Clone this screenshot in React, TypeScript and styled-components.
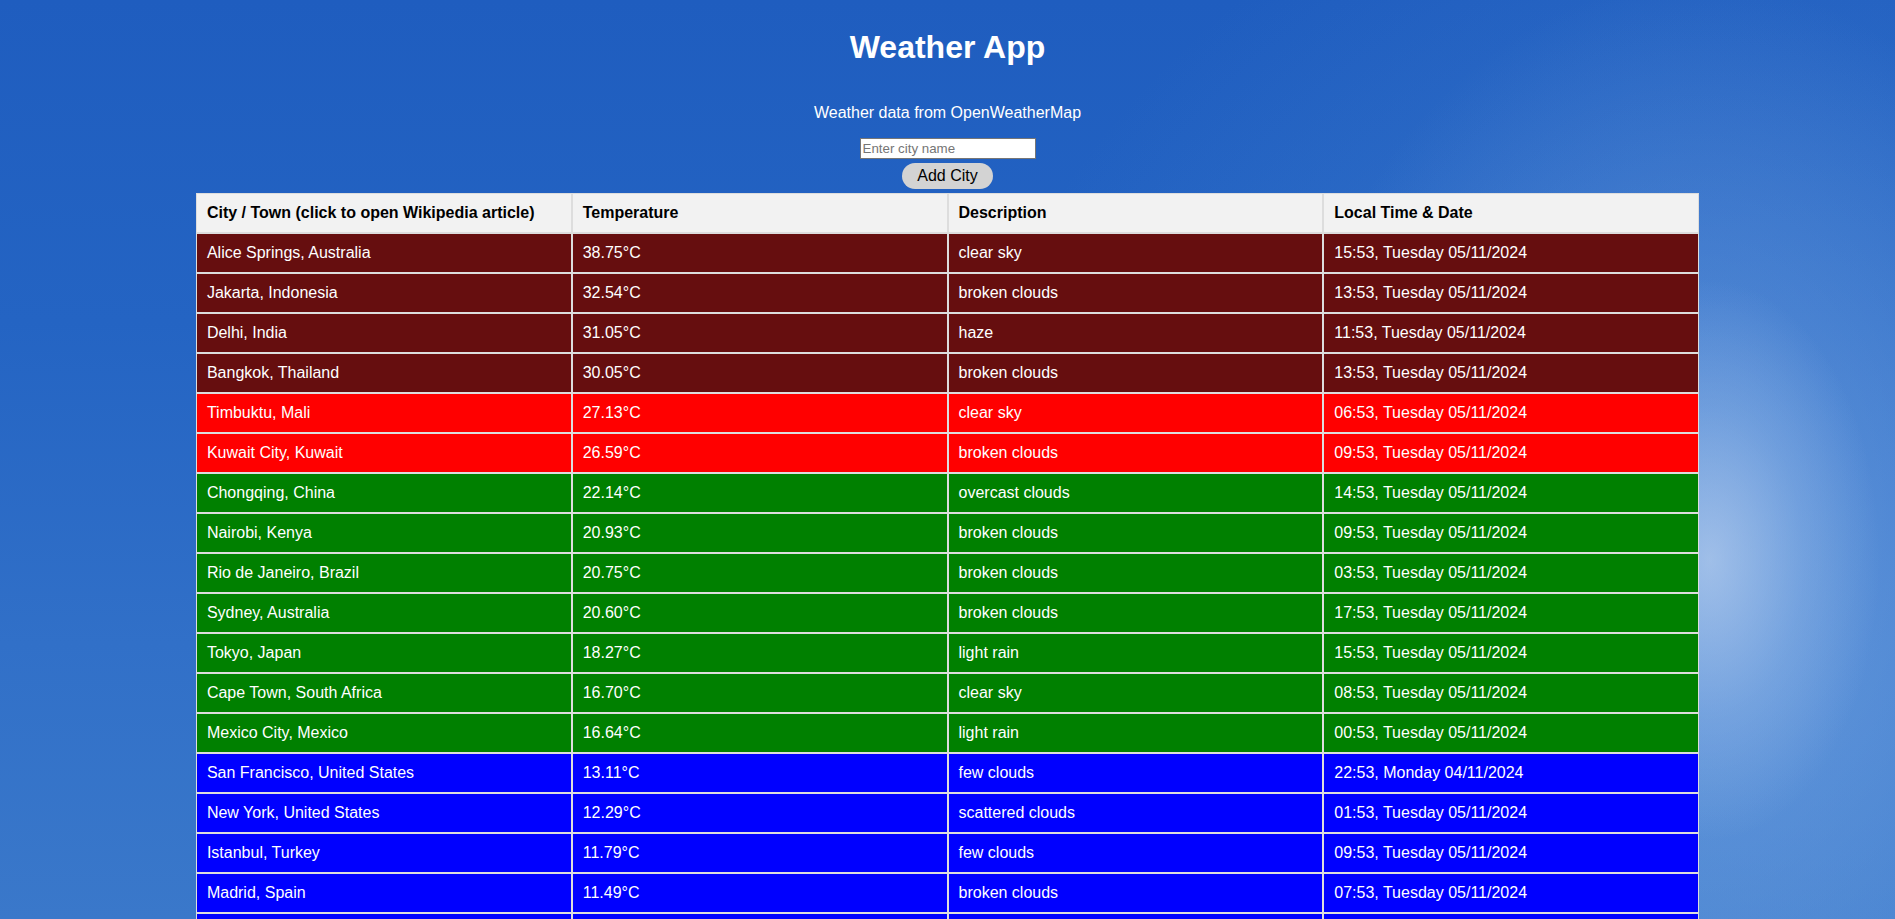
import React from "react";
import styled, { createGlobalStyle } from "styled-components";

const GlobalStyle = createGlobalStyle`
  html {
    scrollbar-width: none;
    min-height: 100%;
    background-color: #2a69c6;
    background-image:
      radial-gradient(ellipse 170px 280px at 1710px 560px, rgba(200, 218, 242, 0.6), rgba(170, 200, 238, 0.3) 55%, rgba(140, 180, 230, 0) 100%),
      radial-gradient(ellipse 440px 600px at 1700px 580px, rgba(130, 172, 228, 0.55), rgba(100, 150, 220, 0) 100%),
      radial-gradient(ellipse 900px 900px at 1800px 700px, rgba(80, 140, 215, 0.6), rgba(80, 140, 215, 0) 100%),
      linear-gradient(180deg, #1f5dbf 0%, #2464c3 35%, #3170c8 70%, #3a78ca 100%);
    background-attachment: fixed;
  }
  html::-webkit-scrollbar { display: none; }
  body {
    margin: 0;
    padding: 8px;
    font-family: "Liberation Sans", Arial, sans-serif;
    color: #ffffff;
  }
`;

const Page = styled.div`
  display: flex;
  flex-direction: column;
  align-items: center;
  text-align: center;
`;

const Title = styled.h1`
  margin: 21px 0 0;
  font-size: 32px;
  line-height: 37px;
  font-weight: 700;
  color: #ffffff;
`;

const Subtitle = styled.p`
  margin: 38px 0 0;
  font-size: 16px;
  line-height: 18px;
  color: #ffffff;
`;

const Form = styled.form`
  margin-top: 16px;
  display: flex;
  flex-direction: column;
  align-items: center;
  gap: 4px;
`;

const CityInput = styled.input`
  box-sizing: border-box;
  width: 176px;
  height: 21px;
  padding: 1px 2px;
  border: 1px solid #767676;
  background: #ffffff;
  font-family: "Liberation Sans", Arial, sans-serif;
  font-size: 13.33px;
  color: #000;
  outline: none;
  &::placeholder {
    color: #757575;
  }
`;

const AddButton = styled.button`
  height: 26px;
  padding: 4px 15px;
  border: none;
  border-radius: 13px;
  background: #d3d3d3;
  color: #000;
  font-family: "Liberation Sans", Arial, sans-serif;
  font-size: 16px;
  line-height: 18px;
  cursor: pointer;
`;

const Table = styled.table`
  width: 80%;
  margin-top: 4px;
  border-collapse: separate;
  border-spacing: 0;
  table-layout: fixed;
  text-align: left;
`;

const HeadCell = styled.th`
  padding: 10px;
  border: 1px solid #dddddd;
  background: #f2f2f2;
  color: #000000;
  font-size: 16px;
  line-height: 18px;
  font-weight: 700;
  text-align: left;
  white-space: nowrap;
`;

const Row = styled.tr<{ $bg: string }>`
  background: ${(p) => p.$bg};
`;

const Cell = styled.td`
  padding: 10px;
  border: 1px solid #dddddd;
  color: #ffffff;
  font-size: 16px;
  line-height: 18px;
`;

const CityLink = styled.a`
  color: #ffffff;
  text-decoration: none;
`;

type Band = "hot" | "warm" | "mild" | "cool";

const bandColor: Record<Band, string> = {
  hot: "#660e0f",
  warm: "#ff0000",
  mild: "#008000",
  cool: "#0000ff",
};

const rows: { city: string; temp: string; desc: string; time: string; band: Band }[] = [
  { city: "Alice Springs, Australia", temp: "38.75°C", desc: "clear sky", time: "15:53, Tuesday 05/11/2024", band: "hot" },
  { city: "Jakarta, Indonesia", temp: "32.54°C", desc: "broken clouds", time: "13:53, Tuesday 05/11/2024", band: "hot" },
  { city: "Delhi, India", temp: "31.05°C", desc: "haze", time: "11:53, Tuesday 05/11/2024", band: "hot" },
  { city: "Bangkok, Thailand", temp: "30.05°C", desc: "broken clouds", time: "13:53, Tuesday 05/11/2024", band: "hot" },
  { city: "Timbuktu, Mali", temp: "27.13°C", desc: "clear sky", time: "06:53, Tuesday 05/11/2024", band: "warm" },
  { city: "Kuwait City, Kuwait", temp: "26.59°C", desc: "broken clouds", time: "09:53, Tuesday 05/11/2024", band: "warm" },
  { city: "Chongqing, China", temp: "22.14°C", desc: "overcast clouds", time: "14:53, Tuesday 05/11/2024", band: "mild" },
  { city: "Nairobi, Kenya", temp: "20.93°C", desc: "broken clouds", time: "09:53, Tuesday 05/11/2024", band: "mild" },
  { city: "Rio de Janeiro, Brazil", temp: "20.75°C", desc: "broken clouds", time: "03:53, Tuesday 05/11/2024", band: "mild" },
  { city: "Sydney, Australia", temp: "20.60°C", desc: "broken clouds", time: "17:53, Tuesday 05/11/2024", band: "mild" },
  { city: "Tokyo, Japan", temp: "18.27°C", desc: "light rain", time: "15:53, Tuesday 05/11/2024", band: "mild" },
  { city: "Cape Town, South Africa", temp: "16.70°C", desc: "clear sky", time: "08:53, Tuesday 05/11/2024", band: "mild" },
  { city: "Mexico City, Mexico", temp: "16.64°C", desc: "light rain", time: "00:53, Tuesday 05/11/2024", band: "mild" },
  { city: "San Francisco, United States", temp: "13.11°C", desc: "few clouds", time: "22:53, Monday 04/11/2024", band: "cool" },
  { city: "New York, United States", temp: "12.29°C", desc: "scattered clouds", time: "01:53, Tuesday 05/11/2024", band: "cool" },
  { city: "Istanbul, Turkey", temp: "11.79°C", desc: "few clouds", time: "09:53, Tuesday 05/11/2024", band: "cool" },
  { city: "Madrid, Spain", temp: "11.49°C", desc: "broken clouds", time: "07:53, Tuesday 05/11/2024", band: "cool" },
  { city: "London, United Kingdom", temp: "10.84°C", desc: "overcast clouds", time: "06:53, Tuesday 05/11/2024", band: "cool" },
  { city: "Paris, France", temp: "9.62°C", desc: "mist", time: "07:53, Tuesday 05/11/2024", band: "cool" },
  { city: "Moscow, Russia", temp: "4.21°C", desc: "overcast clouds", time: "09:53, Tuesday 05/11/2024", band: "cool" },
];

const wikiUrl = (city: string) =>
  "https://en.wikipedia.org/wiki/" + encodeURIComponent(city.split(",")[0].trim().replace(/ /g, "_"));

export default function App() {
  return (
    <>
      <GlobalStyle />
      <Page>
        <Title>Weather App</Title>
        <Subtitle>Weather data from OpenWeatherMap</Subtitle>
        <Form onSubmit={(e) => e.preventDefault()}>
          <CityInput type="text" placeholder="Enter city name" />
          <AddButton type="submit">Add City</AddButton>
        </Form>
        <Table>
          <thead>
            <tr>
              <HeadCell>City / Town (click to open Wikipedia article)</HeadCell>
              <HeadCell>Temperature</HeadCell>
              <HeadCell>Description</HeadCell>
              <HeadCell>Local Time &amp; Date</HeadCell>
            </tr>
          </thead>
          <tbody>
            {rows.map((r) => (
              <Row key={r.city} $bg={bandColor[r.band]}>
                <Cell>
                  <CityLink href={wikiUrl(r.city)} target="_blank" rel="noreferrer">
                    {r.city}
                  </CityLink>
                </Cell>
                <Cell>{r.temp}</Cell>
                <Cell>{r.desc}</Cell>
                <Cell>{r.time}</Cell>
              </Row>
            ))}
          </tbody>
        </Table>
      </Page>
    </>
  );
}
